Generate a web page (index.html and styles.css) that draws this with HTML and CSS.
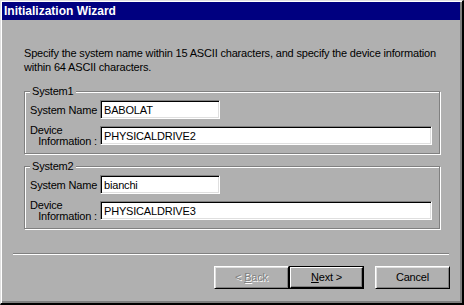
FILE: index.html
```html
<!DOCTYPE html>
<html lang="en">
<head>
    <meta charset="UTF-8">
    <title>Initialization Wizard</title>
    <link rel="stylesheet" href="styles.css">
</head>
<body>
    <div class="window">
        <div class="titlebar">Initialization Wizard</div>
        <div class="content">
            <p class="intro">Specify the system name within 15 ASCII characters, and specify the device information<br>within 64 ASCII characters.</p>

            <fieldset class="group">
                <legend>System1</legend>
                <div class="row">
                    <label class="lbl">System Name</label>
                    <div class="field name">BABOLAT</div>
                </div>
                <div class="row">
                    <label class="lbl two"><span>Device</span><span class="right">Information :</span></label>
                    <div class="field wide">PHYSICALDRIVE2</div>
                </div>
            </fieldset>

            <fieldset class="group second">
                <legend>System2</legend>
                <div class="row">
                    <label class="lbl">System Name</label>
                    <div class="field name">bianchi</div>
                </div>
                <div class="row">
                    <label class="lbl two"><span>Device</span><span class="right">Information :</span></label>
                    <div class="field wide">PHYSICALDRIVE3</div>
                </div>
            </fieldset>
        </div>

        <div class="sep"></div>

        <div class="buttons">
            <div class="btn disabled">&lt; <u>B</u>ack</div>
            <div class="btn default"><span class="inner"><u>N</u>ext &gt;</span></div>
            <div class="btn cancel">Cancel</div>
        </div>
    </div>
</body>
</html>
```

FILE: styles.css
```css
body {
    margin: 0;
    padding: 0;
    font-family: "Liberation Sans", Arial, sans-serif;
    font-size: 11px;
    letter-spacing: -0.18px;
    color: #000;
    background: #000;
}

.window {
    width: 464px;
    height: 305px;
    box-sizing: border-box;
    background: #b0b0b0;
    border-style: solid;
    border-width: 1px 2px 2px 1px;
    border-color: #dfdfdf #000 #000 #dfdfdf;
    box-shadow: inset 1px 1px #fff, inset -2px -2px #808080;
    padding: 1px 2px 2px 1px;
    display: flex;
    flex-direction: column;
    overflow: hidden;
}

.titlebar {
    flex: none;
    height: 18px;
    line-height: 18px;
    background: #000080;
    color: #fff;
    font-weight: bold;
    font-size: 12px;
    letter-spacing: 0;
    padding-left: 2px;
}

.content {
    padding: 26px 20px 0 22px;
}

.intro {
    margin: 0;
    line-height: 14px;
    white-space: nowrap;
}

.group {
    margin: 10px 0 0 0;
    padding: 2px 5px 8px 5px;
    border: 1px solid #808080;
    box-shadow: 1px 1px #fff, inset 1px 1px #fff;
}

.group.second {
    margin-top: 5px;
}

.group legend {
    padding: 0 2px;
    line-height: 14px;
    background: #b0b0b0;
}

.row {
    display: flex;
    align-items: center;
}

.row + .row {
    margin-top: 7px;
}

.lbl {
    width: 70px;
    white-space: nowrap;
}

.lbl.two {
    height: 19px;
    display: flex;
    flex-direction: column;
    justify-content: center;
    line-height: 11px;
}

.lbl .right {
    text-align: right;
    padding-right: 3px;
}

.field {
    height: 19px;
    box-sizing: border-box;
    background: #fff;
    border-style: solid;
    border-width: 1px;
    border-color: #808080 #fff #fff #808080;
    box-shadow: inset 1px 1px #000, inset -1px -1px #dfdfdf;
    padding: 2px 3px;
    line-height: 15px;
    white-space: nowrap;
}

.field.name {
    width: 120px;
}

.field.wide {
    width: 332px;
}

.sep {
    flex: none;
    margin: 24px 11px 0 11px;
    height: 0;
    border-top: 1px solid #808080;
    border-bottom: 1px solid #fff;
}

.buttons {
    display: flex;
    justify-content: flex-end;
    padding: 11px 10px 0 0;
}

.btn {
    width: 75px;
    height: 23px;
    box-sizing: border-box;
    border-style: solid;
    border-width: 1px;
    border-color: #fff #000 #000 #fff;
    box-shadow: inset 1px 1px #dfdfdf, inset -1px -1px #808080;
    text-align: center;
    line-height: 21px;
}

.btn.disabled {
    color: #808080;
    text-shadow: 1px 1px #fff;
}

.btn.default {
    border: 1px solid #000;
    box-shadow: none;
}

.btn.default .inner {
    display: block;
    height: 21px;
    box-sizing: border-box;
    border-style: solid;
    border-width: 1px;
    border-color: #fff #000 #000 #fff;
    box-shadow: inset -1px -1px #808080;
    line-height: 19px;
}

.btn.cancel {
    margin-left: 11px;
}
```
